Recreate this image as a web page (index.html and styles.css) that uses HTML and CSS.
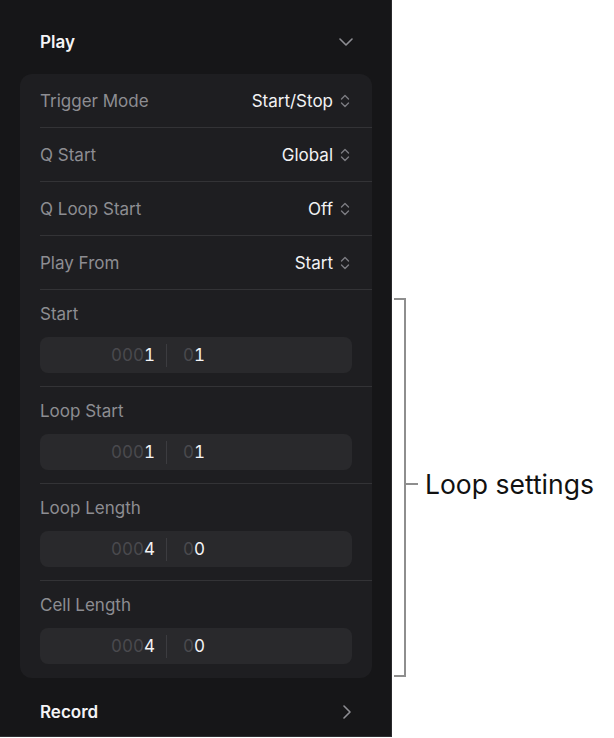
FILE: index.html
```html
<!DOCTYPE html>
<html lang="en">
<head>
  <meta charset="UTF-8" />
  <meta name="viewport" content="width=device-width, initial-scale=1.0" />
  <title>Play Settings</title>
  <link rel="stylesheet" href="styles.css">
</head>
<body>
  <div class="panel">
    <div class="section-head">
      <span>Play</span>
      <svg class="chev" width="14" height="8" viewBox="0 0 14 8"><path d="M1 1l6 6 6-6" fill="none" stroke="#8e8e93" stroke-width="1.6" stroke-linecap="round" stroke-linejoin="round"/></svg>
    </div>

    <div class="card">
      <div class="row">
        <span class="label">Trigger Mode</span>
        <span class="value">Start/Stop <svg class="updown" width="10" height="14" viewBox="0 0 10 14"><path d="M1.5 5L5 1.5 8.5 5M1.5 9L5 12.5 8.5 9" fill="none" stroke="#7c7c81" stroke-width="1.4" stroke-linecap="round" stroke-linejoin="round"/></svg></span>
      </div>
      <div class="row">
        <span class="label">Q Start</span>
        <span class="value">Global <svg class="updown" width="10" height="14" viewBox="0 0 10 14"><path d="M1.5 5L5 1.5 8.5 5M1.5 9L5 12.5 8.5 9" fill="none" stroke="#7c7c81" stroke-width="1.4" stroke-linecap="round" stroke-linejoin="round"/></svg></span>
      </div>
      <div class="row">
        <span class="label">Q Loop Start</span>
        <span class="value">Off <svg class="updown" width="10" height="14" viewBox="0 0 10 14"><path d="M1.5 5L5 1.5 8.5 5M1.5 9L5 12.5 8.5 9" fill="none" stroke="#7c7c81" stroke-width="1.4" stroke-linecap="round" stroke-linejoin="round"/></svg></span>
      </div>
      <div class="row">
        <span class="label">Play From</span>
        <span class="value">Start <svg class="updown" width="10" height="14" viewBox="0 0 10 14"><path d="M1.5 5L5 1.5 8.5 5M1.5 9L5 12.5 8.5 9" fill="none" stroke="#7c7c81" stroke-width="1.4" stroke-linecap="round" stroke-linejoin="round"/></svg></span>
      </div>

      <div class="block">
        <div class="label">Start</div>
        <div class="field">
          <span class="bar"><span class="dim">000</span>1</span>
          <span class="split"></span>
          <span class="beat"><span class="dim">0</span>1</span>
        </div>
      </div>
      <div class="block">
        <div class="label">Loop Start</div>
        <div class="field">
          <span class="bar"><span class="dim">000</span>1</span>
          <span class="split"></span>
          <span class="beat"><span class="dim">0</span>1</span>
        </div>
      </div>
      <div class="block">
        <div class="label">Loop Length</div>
        <div class="field">
          <span class="bar"><span class="dim">000</span>4</span>
          <span class="split"></span>
          <span class="beat"><span class="dim">0</span>0</span>
        </div>
      </div>
      <div class="block last">
        <div class="label">Cell Length</div>
        <div class="field">
          <span class="bar"><span class="dim">000</span>4</span>
          <span class="split"></span>
          <span class="beat"><span class="dim">0</span>0</span>
        </div>
      </div>
    </div>

    <div class="section-head record">
      <span>Record</span>
      <svg class="chev-right" width="8" height="14" viewBox="0 0 8 14"><path d="M1 1l6 6-6 6" fill="none" stroke="#8e8e93" stroke-width="1.6" stroke-linecap="round" stroke-linejoin="round"/></svg>
    </div>
  </div>

  <div class="annotation">
    <div class="bracket"></div>
    <div class="tick"></div>
    <div class="note">Loop settings</div>
  </div>
</body>
</html>
```

FILE: styles.css
```css
body {
  margin: 0;
  font-family: Inter, 'Noto Sans', sans-serif;
  display: flex;
  width: 614px;
  height: 738px;
  background: #fff;
  overflow: hidden;
}
.panel {
  width: 392px;
  height: 737px;
  flex-shrink: 0;
  background-color: #161618;
  border-right: 1px solid #2a2a2d;
  border-bottom: 1px solid #2f2f32;
  padding: 18px 19px 0 20px;
  box-sizing: border-box;
}
.section-head {
  height: 48px;
  display: flex;
  align-items: center;
  justify-content: space-between;
  padding: 0 19px 0 20px;
  margin-bottom: 8px;
  color: #f4f4f6;
  font-size: 17px;
  font-weight: 600;
}
.section-head.record {
  margin: 10px 0 0;
  padding-right: 21px;
}
.card {
  background: #1e1e21;
  border-radius: 12px;
  padding-left: 20px;
}
.row {
  height: 53px;
  border-bottom: 1px solid #333336;
  display: flex;
  align-items: center;
  justify-content: space-between;
  padding-right: 22px;
  font-size: 17px;
}
.label {
  color: #8d8d92;
  font-size: 17px;
  line-height: 22px;
}
.value {
  color: #f2f2f4;
  display: flex;
  align-items: center;
  gap: 7px;
}
.block {
  padding: 13px 20px 13px 0;
  border-bottom: 1px solid #333336;
}
.block.last {
  border-bottom: none;
  padding-bottom: 14px;
}
.block .label {
  margin-bottom: 12px;
}
.field {
  height: 36px;
  background: #29292c;
  border-radius: 8px;
  display: flex;
  align-items: center;
  color: #f4f4f6;
  font-size: 17px;
  font-variant-numeric: tabular-nums;
}
.bar {
  width: 115px;
  text-align: right;
}
.split {
  width: 1px;
  height: 23px;
  background: #3c3c40;
  margin: 0 16px 0 11px;
}
.dim {
  color: #4a4a4e;
}
.annotation {
  display: flex;
  align-items: center;
  height: 379px;
  margin-top: 298px;
  padding-left: 2px;
}
.bracket {
  width: 10px;
  height: 375px;
  border: 2px solid #8e8e8e;
  border-left: none;
}
.tick {
  width: 12px;
  height: 2px;
  background: #8e8e8e;
  margin-top: -8px;
}
.note {
  margin-left: 7px;
  margin-top: -8px;
  font-size: 26.5px;
  color: #111;
  white-space: nowrap;
}
```
